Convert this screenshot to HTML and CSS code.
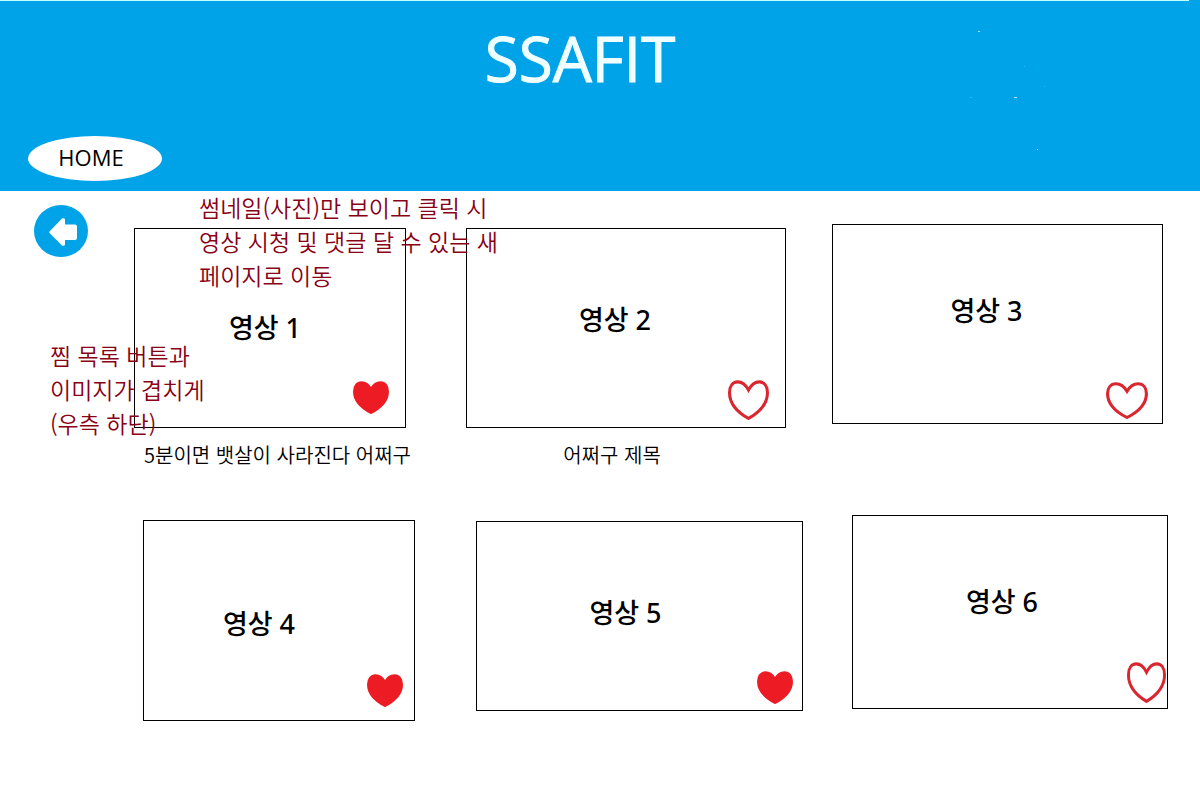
FILE: index.html
```html
<!DOCTYPE html>
<html lang="ko">
<head>
<meta charset="utf-8">
<meta name="viewport" content="width=device-width, initial-scale=1">
<title>SSAFIT</title>
<link rel="stylesheet" href="styles.css">
</head>
<body>
<svg class="symbols" aria-hidden="true">
  <symbol id="heart" viewBox="0 0 40 38" preserveAspectRatio="none">
    <path d="M20 9.500C22.500 5 26 1.800 30.500 1.800C35.500 1.800 38.500 6 38.500 12C38.500 23 30 31 20 36.500C10 31 1.500 23 1.500 12C1.500 6 4.500 1.800 9.500 1.800C14 1.800 17.500 5 20 9.500Z"/>
  </symbol>
</svg>
<header class="header">
  <h1 class="title">SSAFIT</h1>
  <nav><a class="home" href="#">HOME</a></nav>
  <svg class="specks" width="80" height="130" viewBox="0 0 80 130" aria-hidden="true">
    <path d="M8 11h2M44 77h3M67 129h1" transform="translate(0 .5)"/>
    <path class="faint" d="M0 77h2M54 46h1M74 66h1" transform="translate(0 .5)"/>
  </svg>
</header>
<main class="main">
  <a class="back" href="#" aria-label="뒤로">
    <svg viewBox="0 0 54 52" width="54" height="52"><ellipse cx="27" cy="26" rx="27" ry="26"/><path d="M15.500 26.500Q15 27 15.500 28L28 40.500Q30.500 41.500 31 39.500V35H41Q43 35 43 33V21.500Q43 19.500 41 19.500H31V14.500Q30.500 12.500 28 13.500Z"/></svg>
  </a>
  <div class="gallery">
    <div class="row row-top">
      <article class="video v1">
        <div class="frame"><a class="thumb" href="#">영상 1</a><button class="like on" aria-label="찜"><svg><use href="#heart"/></svg></button></div>
        <p class="caption">5분이면 뱃살이 사라진다 어쩌구</p>
      </article>
      <article class="video v2">
        <div class="frame"><a class="thumb" href="#">영상 2</a><button class="like" aria-label="찜"><svg><use href="#heart"/></svg></button></div>
        <p class="caption">어쩌구 제목</p>
      </article>
      <article class="video v3">
        <div class="frame"><a class="thumb" href="#">영상 3</a><button class="like" aria-label="찜"><svg><use href="#heart"/></svg></button></div>
      </article>
    </div>
    <div class="row row-bottom">
      <article class="video v4">
        <div class="frame"><a class="thumb" href="#">영상 4</a><button class="like on" aria-label="찜"><svg><use href="#heart"/></svg></button></div>
      </article>
      <article class="video v5">
        <div class="frame"><a class="thumb" href="#">영상 5</a><button class="like on" aria-label="찜"><svg><use href="#heart"/></svg></button></div>
      </article>
      <article class="video v6">
        <div class="frame"><a class="thumb" href="#">영상 6</a><button class="like" aria-label="찜"><svg><use href="#heart"/></svg></button></div>
      </article>
    </div>
  </div>
  <p class="note note-thumb">썸네일(사진)만 보이고 클릭 시<br>영상 시청 및 댓글 달 수 있는 새<br>페이지로 이동</p>
  <p class="note note-like">찜 목록 버튼과<br>이미지가 겹치게<br>(우측 하단)</p>
</main>
</body>
</html>
```

FILE: styles.css
```css
* { box-sizing: border-box; }

body {
  margin: 0;
  background: #fff;
  color: #000;
  font-family: "Open Sans", "Noto Sans CJK KR", sans-serif;
}

a { color: inherit; text-decoration: none; }
.symbols { position: absolute; width: 0; height: 0; }

.header {
  position: relative;
  padding: 14px 0 10px;
  background: linear-gradient(#c4ffff, #c4ffff) 0 0 / calc(100% - 11px) 1px no-repeat #00a2e8;
}
.title {
  margin: 0;
  padding-right: 40px;
  color: #f0ffff;
  font-size: 62px;
  font-weight: 400;
  line-height: 88px;
  text-align: center;
  -webkit-text-stroke: 1px #f0ffff;
}
.home {
  display: block;
  width: 134px;
  margin: 34px 0 0 28px;
  padding: 0 8px 2px 0;
  border-radius: 50%;
  background: #fff;
  font-size: 22px;
  font-weight: 500;
  line-height: 43px;
  text-align: center;
}
.specks {
  position: absolute;
  top: 20px;
  right: 150px;
  stroke: #b0e4f8;
}
.specks .faint { stroke: #35b5ed; }

.main { position: relative; display: flex; align-items: flex-start; }
.back { flex: none; width: 100px; margin: 14px 0 0 34px; }
.back svg { display: block; }
.back ellipse { fill: #00a2e8; }
.back path { fill: #fff; }

.gallery {
  flex: 1;
  display: flex;
  flex-direction: column;
  gap: 46px;
  padding: 33px 0 32px;
}
.row { display: flex; align-items: flex-start; }
.row-top { padding-right: 37px; }
.row-bottom { padding: 0 32px 0 9px; }

.video { min-width: 0; }
.v1 { flex: 272 1 0; margin-top: 4px; }
.v2 { flex: 320 1 0; margin: 4px 0 0 60px; }
.v3 { flex: 331 1 0; margin-left: 46px; }
.v4 { flex: 272 1 0; margin-top: 5px; }
.v5 { flex: 327 1 0; margin: 6px 0 0 61px; }
.v6 { flex: 316 1 0; margin-left: 49px; }

.frame { position: relative; border: 1px solid #000; }
.thumb {
  display: flex;
  align-items: center;
  justify-content: center;
  height: 198px;
  padding: 0 10px 4px 0;
  font-family: "Noto Sans", "Noto Sans CJK KR", sans-serif;
  font-size: 27px;
  font-weight: 500;
}
.v2 .thumb { padding: 0 22px 20px 0; }
.v3 .thumb { padding: 0 22px 30px 0; }
.v4 .thumb { height: 199px; padding: 4px 40px 0 0; }
.v5 .thumb { height: 188px; padding: 0 28px 10px 0; }
.v6 .thumb { height: 192px; padding: 0 16px 24px 0; }

.caption {
  margin: 12px 0 0;
  padding-left: 10px;
  font-family: "Noto Sans CJK KR", sans-serif;
  font-size: 20px;
  font-weight: 350;
  line-height: 29px;
  white-space: nowrap;
}
.v2 .caption { padding: 0 28px 0 0; text-align: center; }

.like {
  position: absolute;
  right: 16px;
  bottom: 7px;
  width: 41px;
  height: 40px;
  padding: 0;
  border: 0;
  background: none;
  cursor: pointer;
}
.like svg {
  display: block;
  width: 100%;
  height: 100%;
  fill: none;
  stroke: #d9262f;
  stroke-width: 3px;
  overflow: visible;
}
.like.on { width: 36px; height: 33px; bottom: 13px; }
.like.on svg { fill: #ed1c24; stroke: #ed1c24; }
.v3 .like { right: 14px; bottom: 4px; width: 42px; height: 37px; }
.v4 .like { right: 11px; }
.v5 .like.on { right: 9px; bottom: 6px; }
.v6 .like { right: 1px; bottom: 5px; width: 39px; height: 41px; }

.note {
  position: absolute;
  margin: 0;
  color: #880015;
  font-family: "Noto Sans CJK KR", sans-serif;
  font-size: 23px;
  font-weight: 350;
  line-height: 34px;
  white-space: nowrap;
  pointer-events: none;
}
.note-thumb { top: -1px; left: 199px; }
.note-like { top: 147px; left: 50px; }
```
